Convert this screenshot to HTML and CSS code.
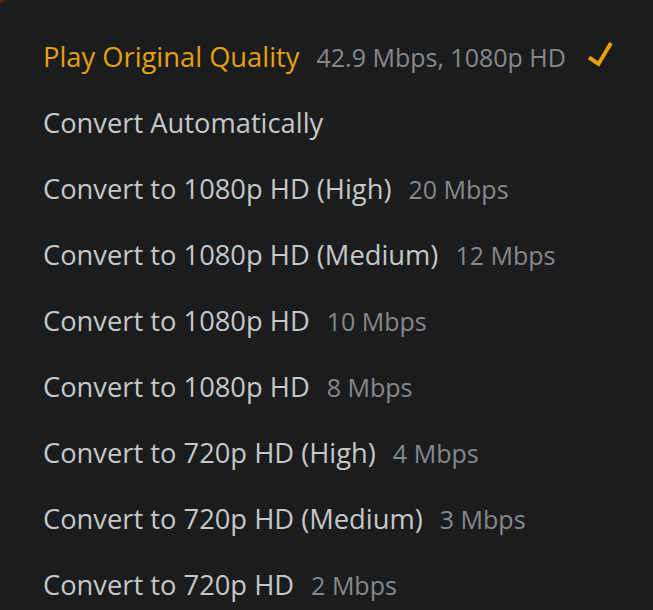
FILE: index.html
```html
<!DOCTYPE html>
<html lang="en">
<head>
    <meta charset="UTF-8">
    <title>Quality</title>
    <link rel="stylesheet" href="styles.css">
</head>
<body>
    <div class="backdrop"></div>
    <div class="menu">
        <div class="item selected">
            <span class="label">Play Original Quality</span>
            <span class="info">42.9 Mbps, 1080p HD</span>
            <svg class="check" width="28" height="26" viewBox="0 0 28 26">
                <path d="M3 16.5 L12.5 23 L25 2" fill="none" stroke="#e5a00d" stroke-width="4"/>
            </svg>
        </div>
        <div class="item"><span class="label">Convert Automatically</span></div>
        <div class="item"><span class="label">Convert to 1080p HD (High)</span><span class="info">20 Mbps</span></div>
        <div class="item"><span class="label">Convert to 1080p HD (Medium)</span><span class="info">12 Mbps</span></div>
        <div class="item"><span class="label">Convert to 1080p HD</span><span class="info">10 Mbps</span></div>
        <div class="item"><span class="label">Convert to 1080p HD</span><span class="info">8 Mbps</span></div>
        <div class="item"><span class="label">Convert to 720p HD (High)</span><span class="info">4 Mbps</span></div>
        <div class="item"><span class="label">Convert to 720p HD (Medium)</span><span class="info">3 Mbps</span></div>
        <div class="item"><span class="label">Convert to 720p HD</span><span class="info">2 Mbps</span></div>
    </div>
</body>
</html>
```

FILE: styles.css
```css
body {
    margin: 0;
    background-color: #1b1c1e;
    font-family: "Open Sans", "Noto Sans", sans-serif;
    overflow: hidden;
}

.backdrop {
    height: 3px;
    background-color: #5b2912;
}

.menu {
    background-color: #1b1c1e;
    border-top-left-radius: 7px;
    margin-top: -3px;
    padding: 39px 0 0 43px;
    position: relative;
}

.item {
    display: flex;
    align-items: baseline;
    height: 66px;
    line-height: 36px;
    white-space: nowrap;
}

.label {
    font-size: 27.3px;
    color: #c6c7c8;
}

.info {
    font-size: 25px;
    color: #87888a;
    margin-left: 17px;
}

.selected .label {
    color: #e5a00d;
}

.check {
    margin-left: 20px;
    align-self: flex-start;
    margin-top: 2px;
}
```
